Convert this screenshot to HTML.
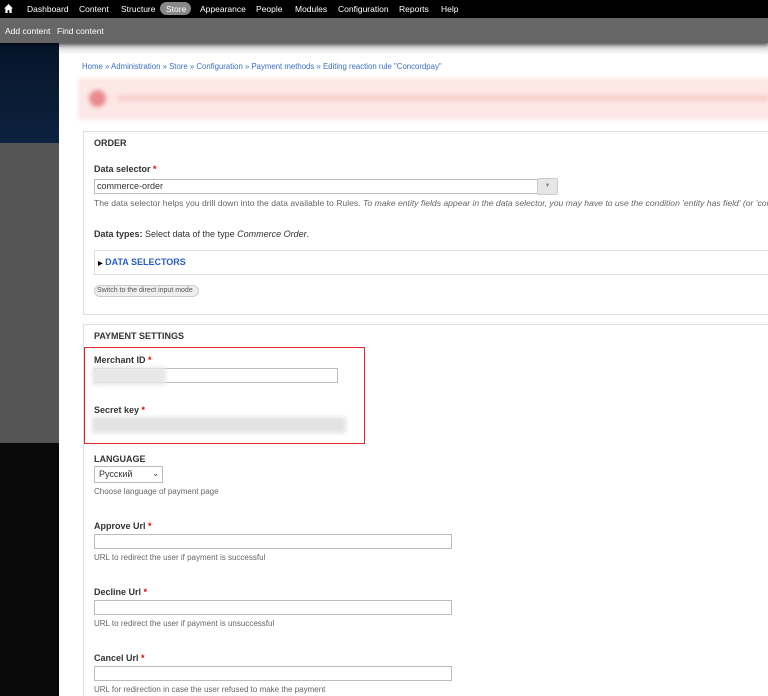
<!DOCTYPE html>
<html style="overflow:hidden;height:696px"><head><meta charset="utf-8"><style>
*{box-sizing:border-box;margin:0;padding:0}
body{width:768px;height:696px;overflow:hidden;background:#fff;font-family:"Liberation Sans",sans-serif;font-size:9px;color:#333;position:relative}
.a{position:absolute}
#tb{left:0;top:0;width:768px;height:18px;background:#000;color:#fff;font-size:8.5px}
#tb span{position:absolute;top:4px}
#sc{left:0;top:18px;width:768px;height:25px;background:#666;color:#fff;font-size:8.5px;box-shadow:0 2px 4px rgba(0,0,0,.6)}
#sc span{position:absolute;top:8px}
.lbl{font-weight:bold;color:#333;font-size:9px}
.req{color:#e00}
.desc{color:#666;font-size:8px}
.inp{border:1px solid #bbb;background:#fff}
.blur{filter:blur(2px)}
</style></head><body>
<div class="a" style="left:0;top:43px;width:59px;height:100px;background:linear-gradient(#061428,#0d2240)"></div>
<div class="a" style="left:0;top:143px;width:59px;height:300px;background:#555"></div>
<div class="a" style="left:0;top:443px;width:59px;height:253px;background:#0a0a0a"></div>
<div class="a" style="left:59px;top:43px;width:709px;height:12px;background:linear-gradient(#ccc,#fff)"></div>
<div id="tb" class="a">
<svg class="a" style="left:4px;top:4px" width="9" height="9" viewBox="0 0 10 10"><path d="M5 0L0 5h1.5v5h2.5V7h2v3h2.5V5H10z" fill="#fff"/></svg>
<span style="left:27px">Dashboard</span><span style="left:79px">Content</span><span style="left:121px">Structure</span>
<span style="left:160px;top:2px;width:31px;height:13px;background:#888;border-radius:7px;padding:2px 0 0 6px">Store</span>
<span style="left:200px">Appearance</span><span style="left:256px">People</span><span style="left:295px">Modules</span><span style="left:338px">Configuration</span><span style="left:399px">Reports</span><span style="left:441px">Help</span>
</div>
<div id="sc" class="a"><span style="left:5px">Add content</span><span style="left:57px">Find content</span></div>
<div class="a" style="left:82px;top:62px;color:#3a6fc4;font-size:7.8px">Home » Administration » Store » Configuration » Payment methods » Editing reaction rule "Concordpay"</div>
<div class="a blur" style="left:79px;top:79px;width:700px;height:40px;background:#fde8e6;border:1px solid #f6cfcb"></div>
<div class="a blur" style="left:89px;top:90px;width:17px;height:17px;border-radius:50%;background:#ea8a90"></div>
<div class="a blur" style="left:118px;top:95px;width:650px;height:6px;background:#f6cdca"></div>
<div class="a" style="left:83px;top:131px;width:700px;height:184px;border:1px solid #ddd"></div>
<div class="a lbl" style="left:94px;top:138px">ORDER</div>
<div class="a lbl" style="left:94px;top:164px">Data selector <span class="req">*</span></div>
<div class="a inp" style="left:94px;top:179px;width:444px;height:15px;padding:1px 2px;font-size:9px;color:#333">commerce-order</div>
<div class="a" style="left:537px;top:178px;width:21px;height:17px;background:#e6e6e6;border:1px solid #ccc;border-radius:2px;color:#888;font-size:6px;text-align:center;line-height:15px">▼</div>
<div class="a desc" style="left:94px;top:198px;white-space:nowrap;font-size:8.6px">The data selector helps you drill down into the data available to Rules. <i>To make entity fields appear in the data selector, you may have to use the condition 'entity has field' (or 'cont</i></div>
<div class="a" style="left:94px;top:229px;font-size:9px"><b>Data types:</b> Select data of the type <i>Commerce Order</i>.</div>
<div class="a" style="left:94px;top:250px;width:690px;height:25px;border:1px solid #ddd"></div>
<div class="a" style="left:98px;top:257px;font-weight:bold;color:#2b5fc7;font-size:9px"><span style="color:#000;font-size:6px">▶</span> DATA SELECTORS</div>
<div class="a" style="left:94px;top:285px;width:105px;height:12px;border:1px solid #ccc;border-radius:6px;background:#eee;font-size:7px;color:#555;padding:1px 0 0 2px">Switch to the direct input mode</div>
<div class="a" style="left:83px;top:324px;width:700px;height:400px;border:1px solid #ddd"></div>
<div class="a lbl" style="left:94px;top:331px">PAYMENT SETTINGS</div>
<div class="a" style="left:84px;top:347px;width:281px;height:97px;border:1.5px solid #e4262b"></div>
<div class="a lbl" style="left:94px;top:355px">Merchant ID <span class="req">*</span></div>
<div class="a inp" style="left:94px;top:368px;width:244px;height:15px"></div>
<div class="a blur" style="left:92px;top:367px;width:74px;height:18px;background:#e8e8e8"></div>
<div class="a lbl" style="left:94px;top:405px">Secret key <span class="req">*</span></div>
<div class="a blur" style="left:92px;top:417px;width:254px;height:16px;background:#e3e3e3"></div>
<div class="a lbl" style="left:94px;top:454px">LANGUAGE</div>
<div class="a inp" style="left:94px;top:466px;width:69px;height:17px;font-size:9px;padding:2px 4px">Русский<span style="position:absolute;right:3px;top:2px;font-size:8px">⌄</span></div>
<div class="a desc" style="left:94px;top:487px">Choose language of payment page</div>
<div class="a lbl" style="left:94px;top:521px">Approve Url <span class="req">*</span></div>
<div class="a inp" style="left:94px;top:534px;width:358px;height:15px"></div>
<div class="a desc" style="left:94px;top:553px">URL to redirect the user if payment is successful</div>
<div class="a lbl" style="left:94px;top:587px">Decline Url <span class="req">*</span></div>
<div class="a inp" style="left:94px;top:600px;width:358px;height:15px"></div>
<div class="a desc" style="left:94px;top:619px">URL to redirect the user if payment is unsuccessful</div>
<div class="a lbl" style="left:94px;top:653px">Cancel Url <span class="req">*</span></div>
<div class="a inp" style="left:94px;top:666px;width:358px;height:15px"></div>
<div class="a desc" style="left:94px;top:685px">URL for redirection in case the user refused to make the payment</div>
</body></html>
